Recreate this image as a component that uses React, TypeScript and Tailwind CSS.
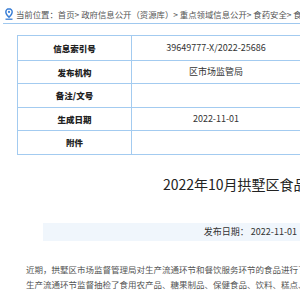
import React from "react";

const rows: [string, string][] = [
  ["信息索引号", "39649777-X/2022-25686"],
  ["发布机构", "区市场监管局"],
  ["备注/文号", ""],
  ["生成日期", "2022-11-01"],
  ["附件", ""],
];
const heights = ["h-[24px]", "h-[23px]", "h-[24px]", "h-[23px]", "h-[24px]"];

export default function App() {
  return (
    <div
      className="w-[300px] h-[300px] overflow-hidden bg-white text-[#333]"
      style={{ fontFamily: '"Noto Sans CJK SC", "Noto Sans", sans-serif' }}
    >
      <div className="flex items-center pl-[5px] pt-[8px] h-[20px] whitespace-nowrap">
        <svg width="8" height="12" viewBox="0 0 8 12" className="shrink-0">
          <path
            d="M4 0.8C2.1 0.8 0.8 2.2 0.8 3.9c0 2.2 3.2 5.3 3.2 5.3s3.2-3.1 3.2-5.3C7.2 2.2 5.9 0.8 4 0.8z"
            fill="none"
            stroke="#3b7fd6"
            strokeWidth="1.4"
          />
          <circle cx="4" cy="3.9" r="1.1" fill="#3b7fd6" />
          <path d="M0.5 11.2h7" stroke="#3b7fd6" strokeWidth="1.3" />
        </svg>
        <span className="ml-[3px] text-[8.4px] leading-none text-[#555]">
          当前位置：首页&gt; 政府信息公开（资源库）&gt; 重点领域信息公开&gt; 食药安全&gt; 食品安全
        </span>
      </div>
      <div className="ml-[3px] mt-[3px] border-b border-[#9fc8ef]" />
      <div className="ml-[17px] mt-[11px] w-[290px] border border-[#a3cbf0]">
        {rows.map(([k, v], i) => (
          <div
            key={k}
            className={`flex ${heights[i]} ${i > 0 ? "border-t border-[#a3cbf0]" : ""}`}
          >
            <div className="w-[114px] shrink-0 flex items-center justify-center border-r border-[#a3cbf0] text-[8.5px] font-black text-[#222]">
              {k}
            </div>
            <div className="flex-1 flex items-center justify-center text-[9px] text-[#333] pr-[6px]">
              {v}
            </div>
          </div>
        ))}
      </div>
      <div className="pl-[163px] mt-[19px] h-[20px] flex items-center whitespace-nowrap text-[14px] text-[#222]">
        2022年10月拱墅区食品安全监督抽检信息公告
      </div>
      <div className="ml-[43px] mt-[29px] h-[18px] bg-[#f0f6fc] flex items-center justify-end pr-[3px] whitespace-nowrap text-[9px] text-[#333]">
        发布日期： 2022-11-01
      </div>
      <div className="pl-[26px] mt-[21px] text-[8.5px] leading-[15px] text-[#555] whitespace-nowrap">
        <div>近期，拱墅区市场监督管理局对生产流通环节和餐饮服务环节的食品进行了监督抽检，</div>
        <div>生产流通环节监督抽检了食用农产品、糖果制品、保健食品、饮料、糕点、方便食品</div>
      </div>
    </div>
  );
}
